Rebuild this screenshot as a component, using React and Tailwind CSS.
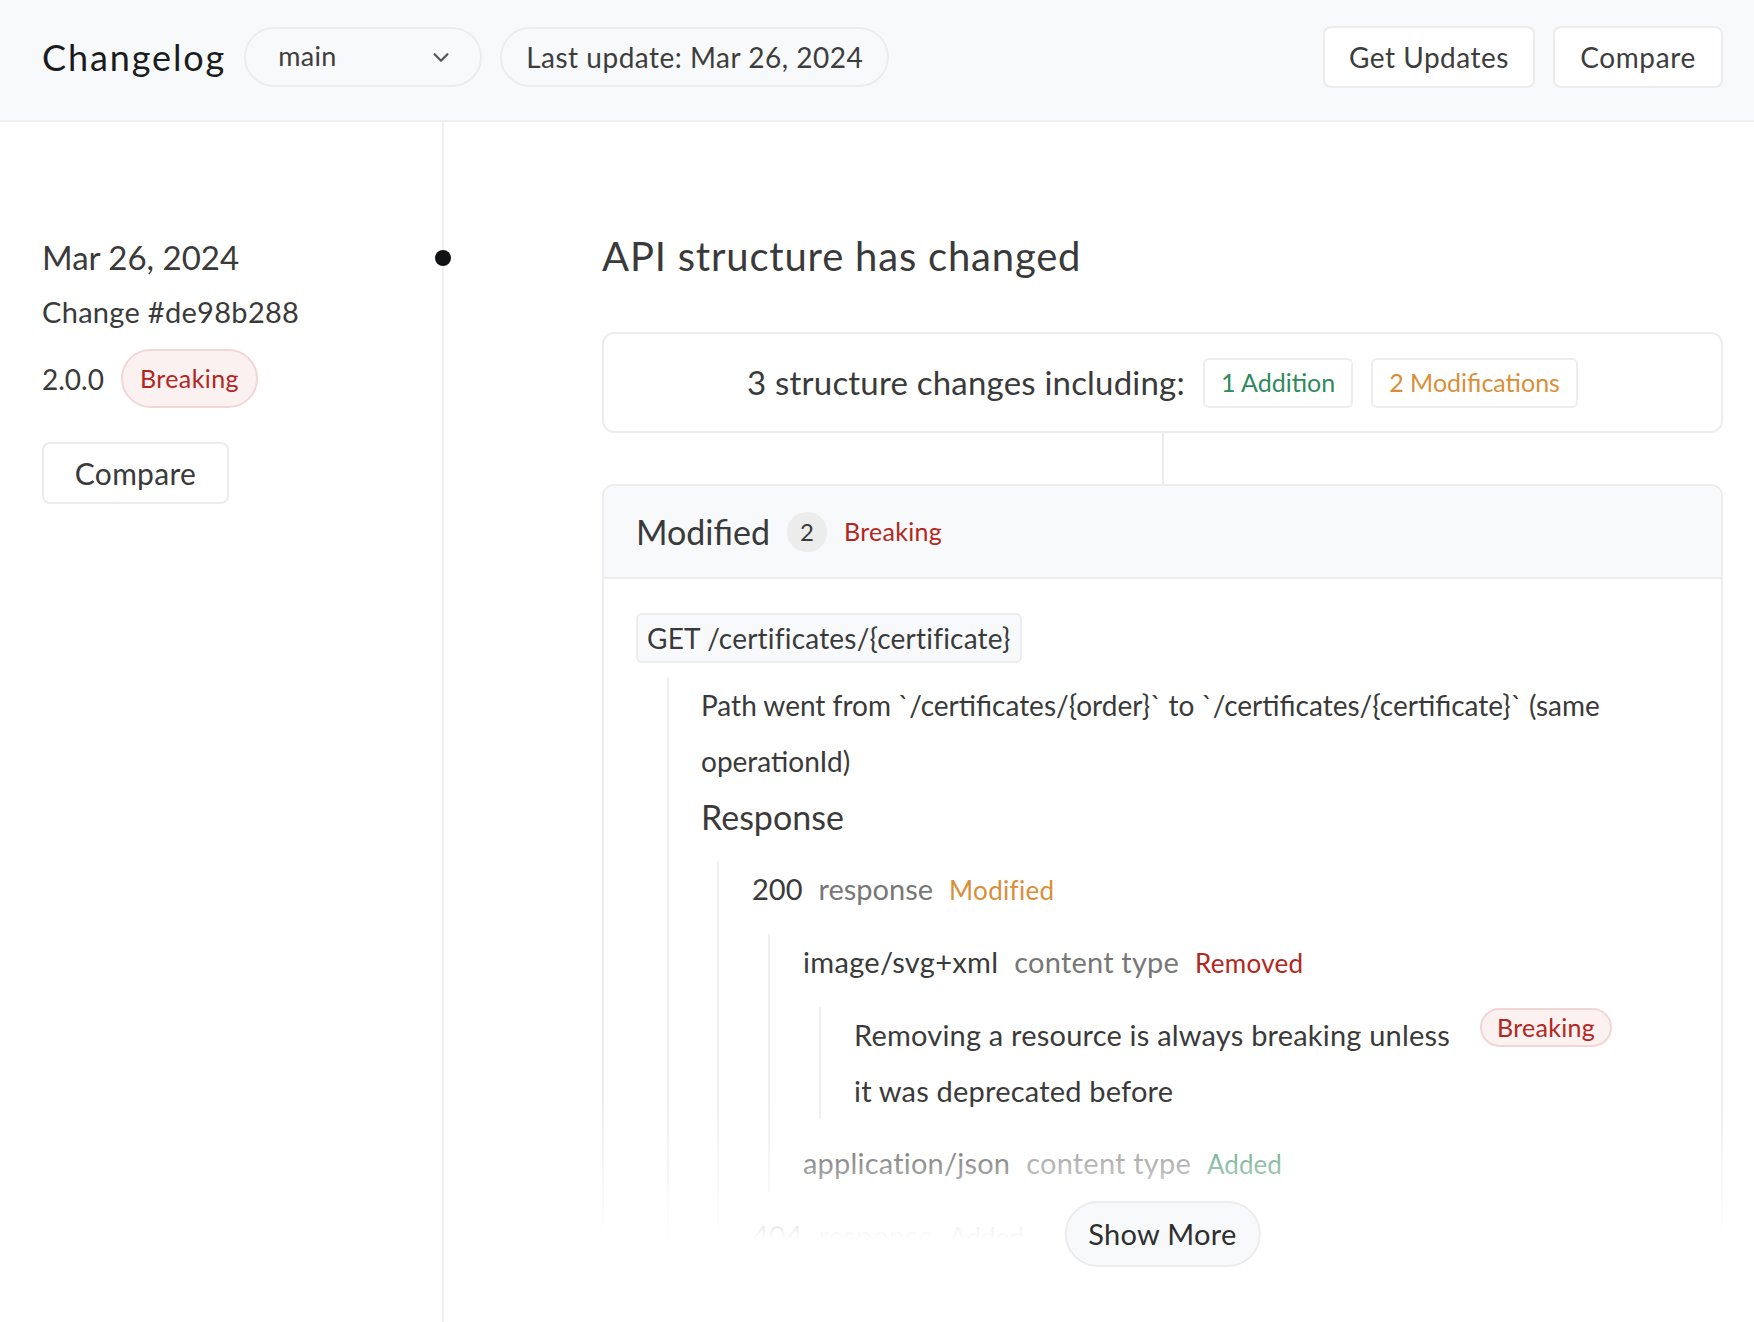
import React from "react";

function Chevron() {
  return (
    <svg viewBox="0 0 24 24" className="w-[22px] h-[22px]" fill="none" stroke="#555" strokeWidth="2.4" strokeLinecap="round" strokeLinejoin="round">
      <path d="M5 9l7 7 7-7" />
    </svg>
  );
}

function Nest({ children, className = "" }) {
  return (
    <div className={"ml-[16px] border-l-2 border-[#efefef] pl-[33px] " + className}>
      {children}
    </div>
  );
}

function App() {
  return (
    <div className="min-h-screen flex flex-col bg-white text-[#3b3b3b] font-['Lato','Liberation_Sans',sans-serif]">
      {/* ----------- Header -------- */}
      <header className="h-[122px] shrink-0 bg-[#f8f9fa] border-b-2 border-[#eeeff1] flex items-center pl-[42px] pr-[31px] pb-[7px]">
        <h1 className="text-[36px] tracking-[1.9px] text-[#1c1c1e] mr-[18px]">Changelog</h1>
        <div className="w-[238px] h-[60px] rounded-full border-2 border-[#ececec] flex items-center justify-between pl-[32px] pr-[28px] mr-[18px]">
          <span className="text-[27px] tracking-[0.3px] text-[#3d3d3d]">main</span>
          <Chevron />
        </div>
        <div className="h-[60px] rounded-full border-2 border-[#ececec] flex items-center px-[24px]">
          <span className="text-[28px] tracking-[0.5px] text-[#3d3d3d]">Last update: Mar 26, 2024</span>
        </div>
        <div className="ml-auto flex gap-[18px]">
          <button className="h-[62px] w-[212px] bg-white border-2 border-[#ececec] rounded-[8px] text-[28px] tracking-[0.5px] text-[#3d3d3d]">
            Get Updates
          </button>
          <button className="h-[62px] w-[170px] bg-white border-2 border-[#ececec] rounded-[8px] text-[28px] tracking-[0.6px] text-[#3d3d3d]">
            Compare
          </button>
        </div>
      </header>

      <div className="flex flex-1">
        {/* ----------- Sidebar -------- */}
        <aside className="w-[444px] shrink-0 border-r-2 border-[#efefef] relative pl-[42px] pt-[112px]">
          <span className="absolute right-[-9px] top-[128px] w-[16px] h-[16px] rounded-full bg-[#111214]" />
          <div className="text-[33px] leading-[46px] text-[#3a3a3a]">Mar 26, 2024</div>
          <div className="text-[29px] leading-[40px] tracking-[0.3px] mt-[12px] text-[#3a3a3a]">Change #de98b288</div>
          <div className="flex items-center gap-[17px] mt-[17px]">
            <span className="text-[28px] text-[#3a3a3a]">2.0.0</span>
            <span className="h-[59px] px-[17px] rounded-full bg-[#fbf1f1] border-2 border-[#f2d6d6] text-[25px] tracking-[0.4px] text-[#b3261e] flex items-center">
              Breaking
            </span>
          </div>
          <button className="mt-[34px] w-[187px] h-[62px] bg-white border-2 border-[#ececec] rounded-[8px] text-[30px] tracking-[0.3px] text-[#3a3a3a]">
            Compare
          </button>
        </aside>

        {/* ----------- Main -------- */}
        <main className="flex-1 pl-[158px] pr-[31px] pt-[111px]">
          <h2 className="text-[40px] leading-[46px] tracking-[0.8px] text-[#3a3a3a]">API structure has changed</h2>

          <div className="mt-[53px] h-[101px] border-2 border-[#ededed] rounded-[12px] flex items-center justify-center gap-[18px]">
            <span className="text-[33px] tracking-[0.2px] text-[#3a3a3a]">3 structure changes including:</span>
            <span className="h-[50px] px-[16px] flex items-center border-2 border-[#ededed] rounded-[6px] text-[25px] text-[#2f8a5e]">
              1 Addition
            </span>
            <span className="h-[50px] px-[16px] flex items-center border-2 border-[#ededed] rounded-[6px] text-[25px] text-[#d98f3a]">
              2 Modifications
            </span>
          </div>

          <div className="mx-auto w-[2px] h-[51px] bg-[#ededed]" />

          <div className="relative">
            <div className="h-[756px] overflow-hidden relative">
              <div className="border-2 border-[#ededed] rounded-[12px] min-h-[900px]">
                <div className="h-[93px] bg-[#f8f9fa] border-b-2 border-[#ededed] rounded-t-[12px] flex items-center pl-[32px] gap-[17px]">
                  <span className="text-[34px] text-[#3a3a3a]">Modified</span>
                  <span className="w-[40px] h-[40px] rounded-full bg-[#ececec] flex items-center justify-center text-[24px] text-[#3a3a3a]">
                    2
                  </span>
                  <span className="text-[25px] tracking-[0.3px] text-[#b3261e]">Breaking</span>
                </div>

                <div className="pl-[32px] pt-[34px]">
                  <div className="inline-block h-[50px] px-[9px] leading-[46px] bg-[#f8f9fa] border-2 border-[#ededed] rounded-[6px] text-[28px] tracking-[0.2px] text-[#3a3a3a]">
                    GET /certificates/{"{certificate}"}
                  </div>

                  <div className="ml-[31px] mt-[14px] border-l-2 border-[#efefef] pl-[32px]">
                    <p className="text-[28px] leading-[56px] max-w-[920px] text-[#3a3a3a]">
                      Path went from `/certificates/{"{order}"}` to `/certificates/{"{certificate}"}` (same operationId)
                    </p>
                    <div className="text-[34px] leading-[56px] text-[#3a3a3a]">Response</div>

                    <Nest className="mt-[16px]">
                      <div className="flex items-baseline gap-[16px] leading-[56px]">
                        <span className="text-[29px] text-[#3a3a3a]">200</span>
                        <span className="text-[29px] text-[#777]">response</span>
                        <span className="text-[26px] tracking-[0.3px] text-[#d98f3a]">Modified</span>
                      </div>

                      <Nest className="my-[16px]">
                        <div className="flex items-baseline gap-[16px] leading-[56px]">
                          <span className="text-[29px] tracking-[0.3px] text-[#3a3a3a]">image/svg+xml</span>
                          <span className="text-[29px] tracking-[0.2px] text-[#777]">content type</span>
                          <span className="text-[26px] tracking-[0.3px] text-[#b3261e]">Removed</span>
                        </div>

                        <Nest className="my-[16px]">
                          <div className="flex items-start gap-[26px]">
                            <p className="text-[29px] leading-[56px] tracking-[0.2px] w-[600px] text-[#3a3a3a]">
                              Removing a resource is always breaking unless it was deprecated before
                            </p>
                            <span className="mt-[1px] h-[39px] px-[15px] rounded-full bg-[#fbf1f1] border-2 border-[#f2d6d6] text-[25px] tracking-[0.3px] text-[#b3261e] flex items-center">
                              Breaking
                            </span>
                          </div>
                        </Nest>

                        <div className="flex items-baseline gap-[16px] leading-[56px]">
                          <span className="text-[29px] tracking-[0.2px] text-[#3a3a3a]">application/json</span>
                          <span className="text-[29px] tracking-[0.2px] text-[#777]">content type</span>
                          <span className="text-[26px] text-[#2f8a5e]">Added</span>
                        </div>
                      </Nest>

                      <div className="flex items-baseline gap-[16px] leading-[56px]">
                        <span className="text-[29px] text-[#3a3a3a]">404</span>
                        <span className="text-[29px] text-[#777]">response</span>
                        <span className="text-[26px] text-[#2f8a5e]">Added</span>
                      </div>
                    </Nest>
                  </div>
                </div>
              </div>
              {/* fade */}
              <div className="absolute inset-x-0 bottom-0 h-[140px] bg-gradient-to-b from-white/0 to-white" />
            </div>

            <button className="absolute left-1/2 -translate-x-1/2 top-[717px] h-[66px] px-[22px] rounded-full bg-[#f8f9fa] border-2 border-[#ececec] text-[29px] tracking-[0.3px] text-[#2f2f2f]">
              Show More
            </button>
          </div>
        </main>
      </div>
    </div>
  );
}

export default App;
